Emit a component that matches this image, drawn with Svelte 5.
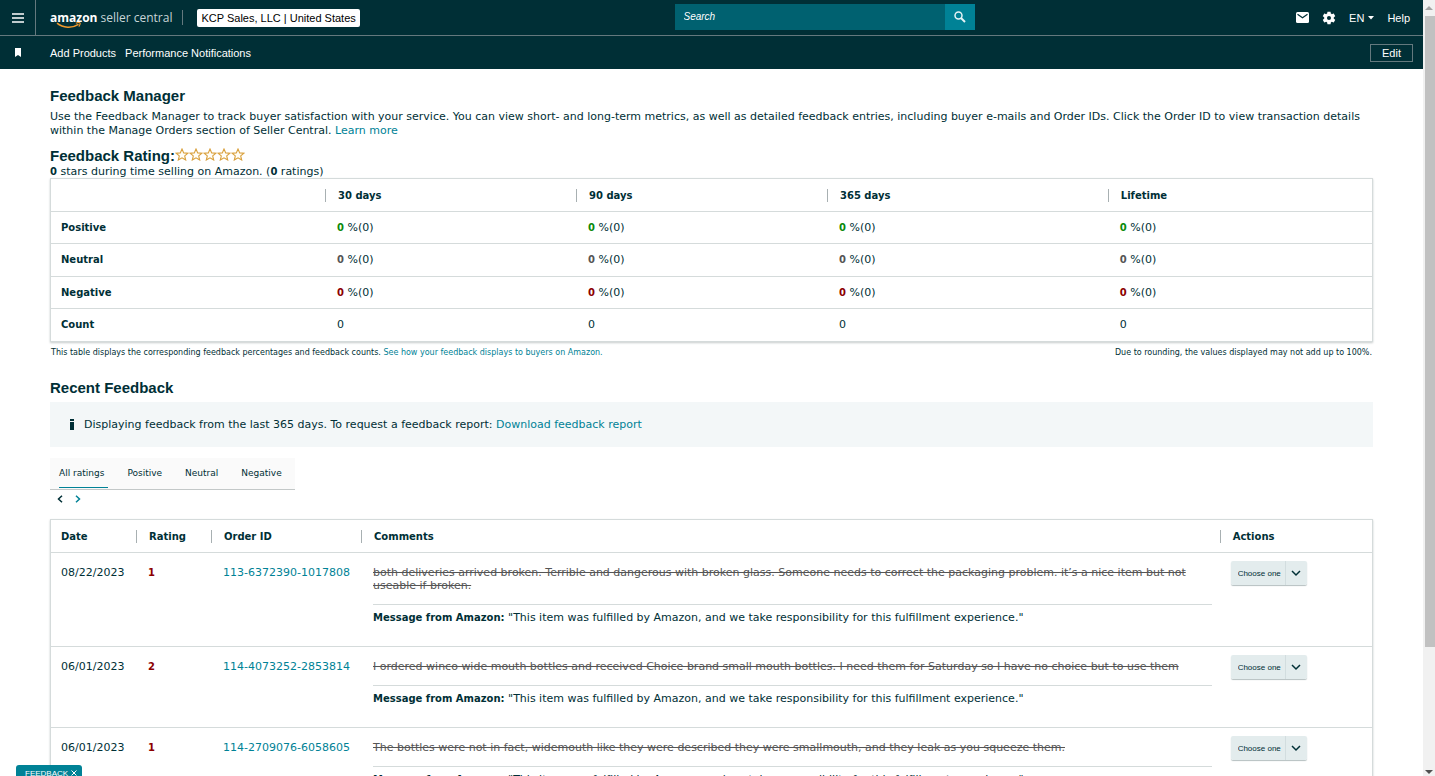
<script>
  const periods = ['30 days', '90 days', '365 days', 'Lifetime'];
  const kinds = [
    { name: 'Positive', tone: 'good' },
    { name: 'Neutral', tone: 'plain' },
    { name: 'Negative', tone: 'bad' }
  ];
  const tabs = ['All ratings', 'Positive', 'Neutral', 'Negative'];
  let active = $state('All ratings');
  const reply = '"This item was fulfilled by Amazon, and we take responsibility for this fulfillment experience."';
  const rows = [
    {
      date: '08/22/2023',
      rating: 1,
      order: '113-6372390-1017808',
      comment:
        'both deliveries arrived broken. Terrible and dangerous with broken glass. Someone needs to correct the packaging problem. it’s a nice item but not useable if broken.'
    },
    {
      date: '06/01/2023',
      rating: 2,
      order: '114-4073252-2853814',
      comment:
        'I ordered winco wide mouth bottles and received Choice brand small mouth bottles. I need them for Saturday so I have no choice but to use them'
    },
    {
      date: '06/01/2023',
      rating: 1,
      order: '114-2709076-6058605',
      comment:
        'The bottles were not in fact, widemouth like they were described they were smallmouth, and they leak as you squeeze them.'
    }
  ];
</script>

<div class="app">
  <div class="page">
    <header>
      <div class="top">
        <button class="menu" aria-label="Menu">
          <svg width="12" height="10" viewBox="0 0 12 10"><path d="M0 1h12M0 5h12M0 9h12" stroke="#fff" stroke-width="1.4" /></svg>
        </button>
        <a class="logo" href="#home">
          <b>amazon</b><span>seller central</span>
          <svg class="smile" width="27" height="7" viewBox="0 0 27 7" fill="none" stroke="#f19a2c">
            <path d="M1 1.2C7 6 16 6.600 22.500 2.400" stroke-width="1.500" />
            <path d="M19.800 1.300c2-.8 3.800-.9 4.200-.4s-.2 2.300-1.200 3.700" stroke-width="1.100" />
          </svg>
        </a>
        <span class="rule"></span>
        <button class="account">KCP Sales, LLC | United States</button>
        <form class="search" onsubmit={(e) => e.preventDefault()}>
          <input type="text" placeholder="Search" aria-label="Search" />
          <button aria-label="Go">
            <svg width="12" height="12" viewBox="0 0 12 12" fill="none" stroke="#e6f3f5"><circle cx="4.500" cy="4.500" r="3.500" stroke-width="1.500" /><path d="M7 7l4 4" stroke-width="2" /></svg>
          </button>
        </form>
        <nav class="tools">
          <a href="#mail" aria-label="Messages">
            <svg width="13" height="11" viewBox="0 0 13 11"><rect width="13" height="11" rx="1.500" fill="#fff" /><path d="M1.500 2.200l5 3.600 5-3.600" fill="none" stroke="#002f36" stroke-width="1.200" /></svg>
          </a>
          <a href="#settings" aria-label="Settings">
            <svg width="14" height="14" viewBox="1 1 22 22"><path fill="#fff" d="M19.430 12.980c.04-.32.07-.64.07-.98s-.03-.66-.07-.98l2.110-1.650c.19-.15.24-.42.12-.64l-2-3.460c-.12-.22-.39-.3-.61-.22l-2.490 1c-.52-.4-1.080-.73-1.690-.98l-.38-2.650C14.460 2.180 14.250 2 14 2h-4c-.25 0-.46.18-.49.42l-.38 2.650c-.61.25-1.170.59-1.690.98l-2.490-1c-.23-.09-.49 0-.61.22l-2 3.460c-.13.22-.07.49.12.64l2.110 1.650c-.04.32-.07.65-.07.98s.03.66.07.98l-2.110 1.650c-.19.15-.24.42-.12.64l2 3.460c.12.22.39.3.61.22l2.490-1c.52.4 1.080.73 1.690.98l.38 2.650c.03.24.24.42.49.42h4c.25 0 .46-.18.49-.42l.38-2.650c.61-.25 1.170-.59 1.690-.98l2.490 1c.23.09.49 0 .61-.22l2-3.460c.12-.22.07-.49-.12-.64l-2.110-1.650zM12 15.200a3.200 3.200 0 1 1 0-6.400 3.200 3.200 0 0 1 0 6.400z" /></svg>
          </a>
          <button class="lang">EN <svg width="6" height="4" viewBox="0 0 6 4"><path d="M0 0h6L3 3.500z" fill="#fff" /></svg></button>
          <a href="#help">Help</a>
        </nav>
      </div>
      <div class="sub">
        <svg class="mark" width="6" height="9" viewBox="0 0 6 9"><path d="M0 0h6v9L3 7 0 9z" fill="#fff" /></svg>
        <nav>
          <a href="#add">Add Products</a>
          <a href="#notifications">Performance Notifications</a>
        </nav>
        <button class="edit">Edit</button>
      </div>
    </header>

    <main>
      <h1>Feedback Manager</h1>
      <p class="intro">
        Use the Feedback Manager to track buyer satisfaction with your service. You can view short- and long-term metrics, as well as detailed feedback entries, including buyer e-mails and Order IDs. Click the Order ID to view transaction details within the Manage Orders section of Seller Central. <a href="#learn">Learn more</a>
      </p>

      <div class="rating">
        <h2>Feedback Rating:</h2>
        <span class="stars" role="img" aria-label="0 out of 5 stars">
          {#each [1, 2, 3, 4, 5] as n (n)}
            <svg width="14" height="13" viewBox="0 0 14 13"><path d="M7 1l1.700 3.900 4.200.3-3.200 2.700 1 4.100L7 9.800 3.300 12l1-4.100L1.100 5.200l4.200-.3z" fill="#fffdf6" stroke="#d9a03c" stroke-width="1.100" /></svg>
          {/each}
        </span>
      </div>
      <p class="total"><b>0</b> stars during time selling on Amazon. (<b>0</b> ratings)</p>

      <table class="summary">
        <colgroup><col class="s1" /><col class="s2" /><col class="s3" /><col /><col class="s5" /></colgroup>
        <thead>
          <tr><td></td>{#each periods as p (p)}<th scope="col"><span>{p}</span></th>{/each}</tr>
        </thead>
        <tbody>
          {#each kinds as k (k.name)}
            <tr>
              <th scope="row">{k.name}</th>
              {#each periods as p (p)}<td><b class={k.tone}>0</b> %(0)</td>{/each}
            </tr>
          {/each}
          <tr><th scope="row">Count</th>{#each periods as p (p)}<td>0</td>{/each}</tr>
        </tbody>
      </table>
      <div class="notes">
        <p>This table displays the corresponding feedback percentages and feedback counts. <a href="#display">See how your feedback displays to buyers on Amazon.</a></p>
        <p>Due to rounding, the values displayed may not add up to 100%.</p>
      </div>

      <h2 class="recent">Recent Feedback</h2>
      <div class="info">
        <svg width="4" height="11" viewBox="0 0 4 11"><path d="M0 0h4v2H0zM0 3h4v8H0z" fill="#002f36" /></svg>
        <p>Displaying feedback from the last 365 days. To request a feedback report: <a href="#report">Download feedback report</a></p>
      </div>

      <div class="tabs" role="tablist">
        {#each tabs as t (t)}
          <button role="tab" aria-selected={active === t} class:active={active === t} onclick={() => (active = t)}>{t}</button>
        {/each}
      </div>
      <div class="pager">
        <button aria-label="Previous page"><svg width="6" height="8" viewBox="0 0 6 8"><path d="M5 .7L1.500 4 5 7.300" /></svg></button>
        <button aria-label="Next page" class="next"><svg width="6" height="8" viewBox="0 0 6 8"><path d="M1 .7L4.500 4 1 7.300" /></svg></button>
      </div>

      <table class="entries">
        <colgroup><col class="e1" /><col class="e2" /><col class="e3" /><col class="e4" /><col /></colgroup>
        <thead>
          <tr>
            {#each ['Date', 'Rating', 'Order ID', 'Comments', 'Actions'] as h (h)}<th scope="col"><span>{h}</span></th>{/each}
          </tr>
        </thead>
        <tbody>
          {#each rows as r (r.order)}
            <tr>
              <td>{r.date}</td>
              <td><b class="bad">{r.rating}</b></td>
              <td><a href="#order">{r.order}</a></td>
              <td class="comment">
                <s>{r.comment}</s>
                <p><b>Message from Amazon:</b> {reply}</p>
              </td>
              <td class="action">
                <div class="choose">
                  <select aria-label="Action for order {r.order}"><option>Choose one</option></select>
                  <svg width="10" height="7" viewBox="0 0 10 7"><path d="M1 1l4 4 4-4" /></svg>
                </div>
              </td>
            </tr>
          {/each}
        </tbody>
      </table>
    </main>
  </div>
  <div class="bar" aria-hidden="true">
    <svg width="8" height="5" viewBox="0 0 8 5"><path d="M0 5l4-4 4 4z" fill="#a3a3a3" /></svg>
    <span></span>
    <svg width="8" height="5" viewBox="0 0 8 5"><path d="M0 0l4 4 4-4z" fill="#505050" /></svg>
  </div>
  <button class="feedback">FEEDBACK <svg width="6" height="6" viewBox="0 0 6 6"><path d="M.5.5l5 5M5.500.5l-5 5" stroke="#fff" /></svg></button>
</div>

<style>
  :global(body) { margin: 0; background: #fff; }
  .app {
    display: grid;
    grid-template-columns: minmax(0, 1fr) 12px;
    height: 100vh;
    overflow: hidden;
    font: 11px/14px 'DejaVu Sans', Verdana, sans-serif;
    color: #002f36;
  }
  .page { overflow: hidden; min-height: 0; }
  button, input, select { font: inherit; color: inherit; border: 0; padding: 0; margin: 0; background: none; border-radius: 0; }
  svg { display: block; flex: none; }
  a { color: #008296; text-decoration: none; }
  h1, h2, p { margin: 0; }
  main b, main th { font-size: 10px; font-weight: bold; }

  header { background: #002f36; color: #fff; font-family: 'Liberation Sans', Arial, sans-serif; }
  header a { color: #fff; }
  .top { display: flex; align-items: center; height: 35px; border-bottom: 1px solid #64797e; position: relative; }
  .menu { width: 35px; height: 35px; display: grid; place-items: center; border-right: 1px solid #64797e; box-sizing: content-box; }
  .logo { position: relative; display: flex; gap: 3px; margin-left: 14px; font: 12px/18px 'Open Sans', sans-serif; white-space: nowrap; }
  .logo span { color: #c8d5d7; }
  .smile { position: absolute; left: 6px; top: 13px; }
  .rule { width: 1px; height: 15px; background: #64797e; margin: 0 14px 0 10px; }
  .account { background: #fff; color: #000; height: 18px; padding: 0 4px; border-radius: 2px; white-space: nowrap; }
  .search { position: absolute; left: calc(50% - 37px); top: 4px; display: flex; width: 300px; height: 26px; }
  .search input { flex: 1; min-width: 0; background: #006170; padding: 0 9px; font-style: italic; font-size: 10px; }
  .search input::placeholder { color: #fff; opacity: 1; }
  .search button { width: 30px; background: #008296; display: grid; place-items: center; }
  .tools { margin-left: auto; display: flex; align-items: center; gap: 13px; margin-right: 13px; }
  .lang { display: flex; align-items: center; gap: 4px; }
  .sub { display: flex; align-items: center; height: 33px; }
  .mark { margin: 0 29px 0 15px; }
  .sub nav { display: flex; gap: 9px; }
  .edit { margin-left: auto; margin-right: 10px; width: 43px; height: 18px; border: 1px solid #64797e; }

  main { padding: 18px 50px 0; }
  h1, h2 { font: bold 15px/18px 'Liberation Sans', Arial, sans-serif; }
  .intro { padding-top: 5px; }
  .rating { display: flex; align-items: flex-start; padding-top: 9px; }
  .rating h2 { font-size: 15px; }
  .stars { display: flex; padding-top: 1px; }
  .total { line-height: 13px; }

  table { width: 100%; table-layout: fixed; border-collapse: separate; border-spacing: 0; border: 1px solid #d5dbdb; box-shadow: 0 1px 2px #c8cccc; box-sizing: border-box; }
  th { text-align: left; }
  th, td { padding: 0 0 0 10px; }
  thead th + th, .summary thead th { padding-left: 0; }
  thead th span { display: block; line-height: 13px; }
  thead th + th span, .summary thead th span { border-left: 1px solid #a8b0b2; padding-left: 12px; }
  tbody td, tbody th { border-top: 1px solid #d5dbdb; }
  .summary tr { height: 32px; }
  .summary tbody tr:nth-child(even) { height: 33px; }
  .summary tbody td { padding-left: 12px; }
  .s1 { width: 274px; }
  .s2, .s3 { width: 19%; }
  .s5 { width: 20%; }
  .good { color: #0a8a0a; }
  .plain { color: #555; }
  .bad { color: #8c0000; }
  .notes { display: flex; justify-content: space-between; font-size: 8px; line-height: 12px; padding: 5px 1px 0; }
  .recent { padding-top: 20px; }
  .info { display: flex; align-items: center; gap: 10px; height: 45px; margin-top: 5px; padding: 0 20px; background: #f3f7f8; box-sizing: border-box; }

  .tabs { display: inline-flex; height: 31px; margin-top: 11px; padding: 0 9px; gap: 15px; background: #fafafa; border-bottom: 1px solid #c3c8c8; font-size: 9px; vertical-align: top; }
  .tabs button { padding: 0 4px; border-bottom: 1px solid transparent; height: 30px; }
  .tabs .active { border-color: #008296; padding-left: 0; }
  .pager { display: flex; gap: 12px; padding: 5px 7px 0; }
  .pager svg { fill: none; stroke: #002f36; stroke-width: 1.5; }
  .pager .next svg { stroke: #008296; }

  .entries { margin-top: 16px; }
  .entries thead tr { height: 32px; }
  .entries td { vertical-align: top; line-height: 13px; padding: 13px 0 22px 10px; }
  .entries tbody td + td { padding-left: 12px; }
  .e1 { width: 85px; }
  .e2 { width: 75px; }
  .e3 { width: 150px; }
  .e4 { width: 65%; }
  .comment s { display: block; color: #555; padding-right: 8px; }
  .comment p { border-top: 1px solid #d5dbdb; margin: 12px 8px 0 0; padding-top: 6px; }
  .entries tbody td.action { padding: 8px 0 0 11px; }
  .choose { position: relative; width: 76px; height: 24px; }
  .choose select { appearance: none; width: 100%; height: 100%; padding: 0 0 0 7px; font: 8px 'Liberation Sans', Arial, sans-serif; border-radius: 2px; background: linear-gradient(90deg, #e3eced 54px, #d2dddf 54px, #d2dddf 55px, #e3eced 55px); box-shadow: 0 1px 1px #b5bfc0; }
  .choose svg { position: absolute; right: 6px; top: 9px; pointer-events: none; fill: none; stroke: #002f36; stroke-width: 1.5; }

  .bar { display: flex; flex-direction: column; align-items: center; background: #f1f1f1; padding: 5px 0 1px; box-sizing: border-box; }
  .bar span { width: 10px; height: 82%; margin: 6px 0 auto 2px; background: #c1c1c1; }
  .feedback { position: fixed; left: 16px; bottom: -5px; display: flex; align-items: center; gap: 3px; height: 16px; padding: 0 5px 0 9px; background: #008296; color: #fff; font: 8px 'Liberation Sans', Arial, sans-serif; border-radius: 3px 3px 0 0; }
</style>
